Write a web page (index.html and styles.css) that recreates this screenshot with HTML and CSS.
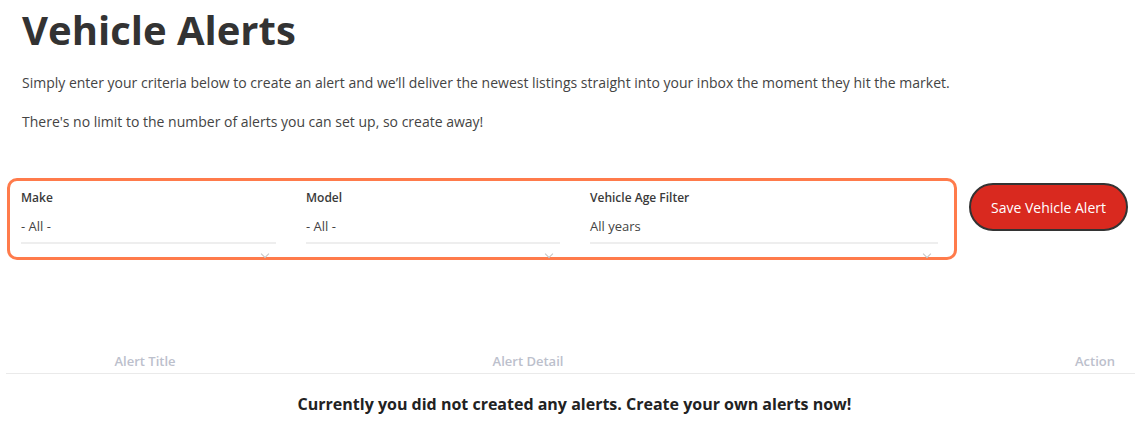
FILE: index.html
```html
<!DOCTYPE html>
<html>
<head>
<meta charset="utf-8">
<link rel="stylesheet" href="styles.css">
</head>
<body>
<div class="page">
  <h1 class="title">Vehicle Alerts</h1>
  <p class="intro">Simply enter your criteria below to create an alert and we’ll deliver the newest listings straight into your inbox the moment they hit the market.</p>
  <p class="intro">There's no limit to the number of alerts you can set up, so create away!</p>
</div>
<div class="form-row">
  <div class="filter-box">
    <div class="field f-make">
      <div class="label">Make</div>
      <div class="value">- All -</div>
      <span class="chev"></span>
    </div>
    <div class="field f-model">
      <div class="label">Model</div>
      <div class="value">- All -</div>
      <span class="chev"></span>
    </div>
    <div class="field f-age">
      <div class="label">Vehicle Age Filter</div>
      <div class="value">All years</div>
      <span class="chev"></span>
    </div>
  </div>
  <button class="save-btn">Save Vehicle Alert</button>
</div>
<div class="alerts">
  <div class="alerts-head">
    <div class="col col-title">Alert Title</div>
    <div class="col col-detail">Alert Detail</div>
    <div class="col col-action">Action</div>
  </div>
  <div class="empty">Currently you did not created any alerts. Create your own alerts now!</div>
</div>
</body>
</html>
```
FILE: styles.css
```css
* { box-sizing: border-box; }
body {
  margin: 0;
  font-family: "Open Sans", "Liberation Sans", sans-serif;
  color: #333;
  background: #fff;
}
.page { padding: 0 22px; }
.title {
  margin: 0;
  padding-top: 3px;
  font-size: 40px;
  line-height: 54px;
  font-weight: 700;
  color: #333;
}
.intro {
  margin: 13px 0 0;
  font-size: 14px;
  line-height: 25px;
  color: #444;
}
.intro + .intro { margin-top: 14px; }
.form-row {
  display: flex;
  align-items: flex-start;
  gap: 12px;
  margin-top: 44px;
  padding-left: 7px;
}
.filter-box {
  width: 950px;
  height: 82px;
  border: 3px solid #ff7b4b;
  border-radius: 10px;
  display: flex;
  gap: 30px;
  padding: 7px 16px 0 11px;
}
.field { position: relative; height: 100%; }
.f-make { width: 255px; }
.f-model { width: 254px; }
.f-age { width: 348px; }
.label {
  font-size: 12px;
  font-weight: 600;
  line-height: 20px;
  color: #3a3a3a;
}
.value {
  margin-top: 8px;
  font-size: 13px;
  line-height: 20px;
  color: #444;
  padding-bottom: 6px;
  border-bottom: 2px solid #eeeeee;
}
.chev {
  position: absolute;
  right: 8px;
  bottom: 0;
  width: 6px;
  height: 6px;
  border-right: 1px solid #c4c4c4;
  border-bottom: 1px solid #c4c4c4;
  transform: rotate(45deg);
}
.save-btn {
  margin-top: 5px;
  width: 159px;
  height: 48px;
  border: 2px solid #333;
  border-radius: 24px;
  background: #d9291f;
  color: #fff;
  font-family: "Open Sans", "Liberation Sans", sans-serif;
  font-size: 14px;
  font-weight: 400;
}
.alerts {
  margin-top: 90px;
  margin-left: 6px;
}
.alerts-head {
  display: flex;
  border-bottom: 1px solid #eaeaea;
  height: 24px;
  font-size: 13px;
  font-weight: 600;
  color: #bcc0cc;
  line-height: 22px;
}
.col-title { width: 278px; text-align: center; }
.col-detail { width: 488px; text-align: center; }
.col-action { flex: 1; text-align: right; padding-right: 20px; }
.empty {
  text-align: center;
  font-size: 16px;
  font-weight: 700;
  color: #222;
  margin-top: 19px;
  width: 1135px;
  padding-left: 2px;
}
```
